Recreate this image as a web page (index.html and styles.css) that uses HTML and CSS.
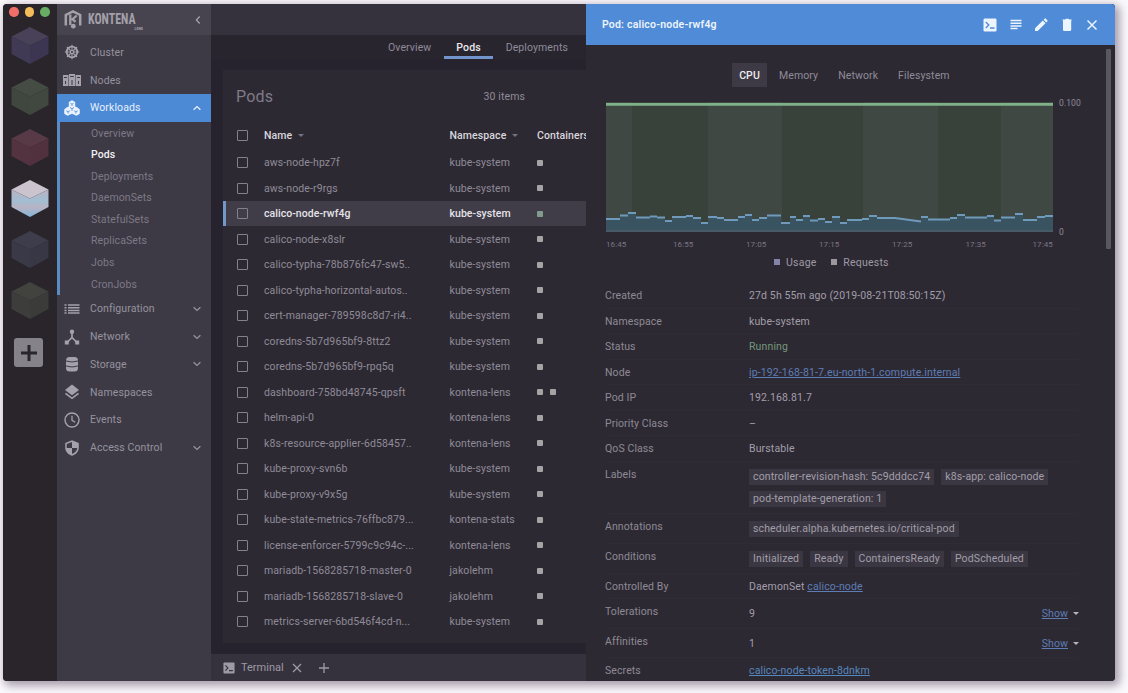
FILE: index.html
```html
<!DOCTYPE html>
<html lang="en">
<head>
<meta charset="utf-8">
<title>Kontena Lens</title>
<link rel="stylesheet" href="styles.css">
</head>
<body>
<svg class="defs" width="0" height="0">
  <linearGradient id="ice" x1="0" y1="0" x2="0" y2="1"><stop offset="0" stop-color="#b9b2c2"/><stop offset=".4" stop-color="#a3bdd3"/><stop offset=".65" stop-color="#b7b4c4"/><stop offset="1" stop-color="#83b4da"/></linearGradient>
  <symbol id="down" viewBox="0 0 10 10"><path d="M1.6 3.2 5 6.4 8.4 3.2" fill="none" stroke="currentColor" stroke-width="1.3"/></symbol>
  <symbol id="term" viewBox="0 0 14 14"><rect x=".5" y=".5" width="13" height="13" rx="1.2" fill="currentColor"/><path d="M2.8 4 5.8 7 2.8 10M7 10h4.5" fill="none" stroke="var(--cut)" stroke-width="1.3"/></symbol>
  <symbol id="cube" viewBox="0 0 38 38"><path d="M19 0 37.5 9.5 19 18.500 .5 9.500Z" fill="var(--t)"/><path d="M.5 9.500 19 18.500V37L.5 27Z" fill="var(--l)"/><path d="M37.500 9.500 19 18.500V37L37.500 27Z" fill="var(--r)"/></symbol>
</svg>
<div class="window">
  <nav class="rail">
    <div class="lights"><i class="red"></i><i class="yellow"></i><i class="green"></i></div>
    <div class="cubes">
      <svg class="cube c1"><use href="#cube"/></svg>
      <svg class="cube c2"><use href="#cube"/></svg>
      <svg class="cube c3"><use href="#cube"/></svg>
      <svg class="cube c4"><use href="#cube"/></svg>
      <svg class="cube c5"><use href="#cube"/></svg>
      <svg class="cube c6"><use href="#cube"/></svg>
    </div>
    <div class="add"><svg width="30" height="30" viewBox="0 0 30 30"><path d="M15 7v16M7 15h16" stroke="#2a262d" stroke-width="3"/></svg></div>
  </nav>

  <aside class="sidebar">
    <div class="brand">
      <svg width="18" height="19" viewBox="0 0 18 19"><path d="M1.800 15.500V5L9 1.400 16.200 5v10.500" fill="none" stroke="#a4a0aa" stroke-width="2.500"/><path d="M6.300 4.500v10.500M12.800 5.500 8.500 9.200l3 2.600" fill="none" stroke="#a4a0aa" stroke-width="2.300"/><circle cx="9.300" cy="16.200" r="2.400" fill="#a4a0aa"/></svg>
      <div class="wordmark"><span>KONTENA</span><small>LENS</small></div>
      <svg class="collapse" width="10" height="10" viewBox="0 0 10 10"><path d="M6.700 1.500 3.400 5l3.300 3.500" fill="none" stroke="currentColor" stroke-width="1.300"/></svg>
    </div>
    <div class="menu">
      <div class="item"><svg class="ico" viewBox="0 0 16 16"><g fill="none" stroke="currentColor"><circle cx="8" cy="8" r="5.300" stroke-width="1.800"/><circle cx="8" cy="8" r="1.700" stroke-width="1.300"/><path d="M8 .8v5M8 10v5.200M.8 8h5M10 8h5.200M3 3l3.500 3.500M13 3 9.500 6.500M3 13l3.500-3.500M13 13 9.500 9.500" stroke-width="1.100"/></g></svg><span>Cluster</span></div>
      <div class="item"><svg class="ico wide" viewBox="0 0 18 14"><path d="M0 2h5.500v11H0zM6 1h6v12H6zM12.500 2H18v11h-5.500z" fill="currentColor"/><path d="M1 4.500h3M7.200 3.500h3.600M14 4.500h3M2.500 8v3M9 7v5M15.500 8v3" stroke="#3d3a45"/></svg><span>Nodes</span></div>
      <div class="item active"><svg class="ico" viewBox="0 0 16 16"><path d="M8 .3 11.200 2v4.400l2.300 1 2.300 2v4.400l-3.300 1.900L8 13.800l-4.500 1.900L.2 13.800V9.400l2.300-2 2.300-1V2z" fill="currentColor"/><path d="M6.300 3.300l1.700.9 1.700-.9M2.300 10.800l1.800.9 1.700-.9M10.200 10.800l1.700.9 1.800-.9M4.100 11.700v1.800M11.900 11.700v1.800M8 4.200V6M8 8.500v2.500M6 7.500l2 1.200 2-1.200" stroke="#4a88d4" fill="none" stroke-width=".8"/></svg><span>Workloads</span><svg class="chev up"><use href="#down"/></svg></div>
      <div class="submenu">
        <span>Overview</span><span class="current">Pods</span><span>Deployments</span><span>DaemonSets</span><span>StatefulSets</span><span>ReplicaSets</span><span>Jobs</span><span>CronJobs</span>
      </div>
      <div class="item"><svg class="ico" viewBox="0 0 16 16"><path d="M.5 4h2M4 4h11.500M.5 6.700h2M4 6.700h11.500M.5 9.400h2M4 9.400h11.500M.5 12.100h2M4 12.100h11.500" stroke="currentColor" stroke-width="1.500"/></svg><span>Configuration</span><svg class="chev"><use href="#down"/></svg></div>
      <div class="item"><svg class="ico" viewBox="0 0 16 16"><path d="M8 3v6M8 8.500l-5 5M8 8.500l5 5" stroke="currentColor" stroke-width="1.700" fill="none"/><circle cx="8" cy="2.800" r="2.200" fill="currentColor"/><path d="M.8 11.500h4v4h-4zM11.200 11.500h4v4h-4z" fill="currentColor"/></svg><span>Network</span><svg class="chev"><use href="#down"/></svg></div>
      <div class="item"><svg class="ico" viewBox="0 0 16 16"><rect x="2" y="1" width="12" height="14.500" rx="3.500" fill="currentColor"/><path d="M2 5q6 2 12 0M2 10q6 2 12 0" stroke="#3d3a45" fill="none"/></svg><span>Storage</span><svg class="chev"><use href="#down"/></svg></div>
      <div class="item"><svg class="ico" viewBox="0 0 16 16"><path d="M8 .5 15 6 8 11.300 1 6z" fill="currentColor"/><path d="M1.500 9.300 8 14.300l6.500-5" fill="none" stroke="currentColor" stroke-width="1.700"/></svg><span>Namespaces</span></div>
      <div class="item"><svg class="ico" viewBox="0 0 16 16"><circle cx="8" cy="8" r="7" fill="none" stroke="currentColor" stroke-width="1.400"/><path d="M8 3.800V8.300l3.200 2" fill="none" stroke="currentColor" stroke-width="1.300"/></svg><span>Events</span></div>
      <div class="item"><svg class="ico" viewBox="0 0 16 16"><path d="M8 .3 14.800 3v4.500c0 4-2.900 7-6.800 8.300-3.900-1.300-6.800-4.300-6.800-8.300V3z" fill="currentColor"/><path d="M8 2v6H2.700V4zM8 8h5.300c-.4 3-2.500 5-5.300 6z" fill="#3d3a45"/></svg><span>Access Control</span><svg class="chev"><use href="#down"/></svg></div>
    </div>
  </aside>

  <main class="main">
    <div class="topbar"></div>
    <div class="tabs"><span>Overview</span><span class="on">Pods</span><span>Deployments</span></div>
    <section class="card">
      <header><h1>Pods</h1><span class="count">30 items</span></header>
      <div class="row head"><i class="box"></i><span>Name <b class="caret"></b></span><span>Namespace <b class="caret"></b></span><span class="last">Containers</span></div>
      <div class="row"><i class="box"></i><span>aws-node-hpz7f</span><span>kube-system</span><em></em></div>
      <div class="row"><i class="box"></i><span>aws-node-r9rgs</span><span>kube-system</span><em></em></div>
      <div class="row selected"><i class="box"></i><span>calico-node-rwf4g</span><span>kube-system</span><em></em></div>
      <div class="row"><i class="box"></i><span>calico-node-x8slr</span><span>kube-system</span><em></em></div>
      <div class="row"><i class="box"></i><span>calico-typha-78b876fc47-sw5..</span><span>kube-system</span><em></em></div>
      <div class="row"><i class="box"></i><span>calico-typha-horizontal-autos..</span><span>kube-system</span><em></em></div>
      <div class="row"><i class="box"></i><span>cert-manager-789598c8d7-ri4..</span><span>kube-system</span><em></em></div>
      <div class="row"><i class="box"></i><span>coredns-5b7d965bf9-8ttz2</span><span>kube-system</span><em></em></div>
      <div class="row"><i class="box"></i><span>coredns-5b7d965bf9-rpq5q</span><span>kube-system</span><em></em></div>
      <div class="row"><i class="box"></i><span>dashboard-758bd48745-qpsft</span><span>kontena-lens</span><em></em><em></em></div>
      <div class="row"><i class="box"></i><span>helm-api-0</span><span>kontena-lens</span><em></em></div>
      <div class="row"><i class="box"></i><span>k8s-resource-applier-6d58457..</span><span>kontena-lens</span><em></em></div>
      <div class="row"><i class="box"></i><span>kube-proxy-svn6b</span><span>kube-system</span><em></em></div>
      <div class="row"><i class="box"></i><span>kube-proxy-v9x5g</span><span>kube-system</span><em></em></div>
      <div class="row"><i class="box"></i><span>kube-state-metrics-76ffbc879...</span><span>kontena-stats</span><em></em></div>
      <div class="row"><i class="box"></i><span>license-enforcer-5799c9c94c-...</span><span>kontena-lens</span><em></em></div>
      <div class="row"><i class="box"></i><span>mariadb-1568285718-master-0</span><span>jakolehm</span><em></em></div>
      <div class="row"><i class="box"></i><span>mariadb-1568285718-slave-0</span><span>jakolehm</span><em></em></div>
      <div class="row"><i class="box"></i><span>metrics-server-6bd546f4cd-n...</span><span>kube-system</span><em></em></div>
    </section>
    <footer class="dock">
      <svg class="dock-term" width="12" height="12"><use href="#term"/></svg><span>Terminal</span>
      <svg class="dock-x" width="10" height="10" viewBox="0 0 10 10"><path d="M1 1l8 8M9 1 1 9" stroke="currentColor" stroke-width="1.300"/></svg>
      <svg width="10" height="10" viewBox="0 0 10 10"><path d="M5 0v10M0 5h10" stroke="currentColor" stroke-width="1.300"/></svg>
    </footer>
  </main>

  <section class="panel">
    <header class="panel-head">
      <h2>Pod: calico-node-rwf4g</h2>
      <div class="actions">
        <svg class="a-term" width="14" height="14"><use href="#term"/></svg>
        <svg width="14" height="14" viewBox="0 0 14 14"><path d="M1.500 2.500h11M1.500 5.200h11M1.500 7.900h11M1.500 10.600h7" stroke="currentColor" stroke-width="1.500"/></svg>
        <svg width="14" height="14" viewBox="0 0 14 14"><path d="M1 10.300 8.800 2.500l2.700 2.700L3.700 13H1zM9.600 1.700l1.200-1.200q.4-.3.800 0l1.900 1.900q.3.400 0 .8l-1.200 1.200z" fill="currentColor"/></svg>
        <svg width="14" height="14" viewBox="0 0 14 14"><path d="M2.500 1.500h2.700l.6-.8h2.800l.6.8h2.500v1h-9.200zM3 2.500h8.200v9.300q0 1.200-1.200 1.200H4.200Q3 13 3 11.800z" fill="currentColor"/></svg>
        <svg width="14" height="14" viewBox="0 0 14 14"><path d="M2.500 2.500l9 9M11.500 2.500l-9 9" stroke="currentColor" stroke-width="1.500"/></svg>
      </div>
    </header>
    <div class="panel-body">
      <div class="metrics"><span class="on">CPU</span><span>Memory</span><span>Network</span><span>Filesystem</span></div>
      <div class="chart">
        <svg width="447" height="130" viewBox="606 102 447 130">
          <path fill="#3f4843" d="M606 102h447v130H606z"/>
          <path fill="#38423b" d="M632 102h76v130h-76zM782 102h81v130h-81zM938 102h63v130h-63z"/>
          <path fill="#3a5360" d="M606 219h14v-3.500h8V213h8v4.500h29v3.500h7v-4h21v1h8v5h7v-6h9v1h7v2h14v-3h7v-2h7v5h7v-2h8v-2.500h14v7.500h9v-6h6v3h7v-4h7v4.500h8V219h7v3h7v-5h8v6h7v-3h15v-1h7v-3h8v2h18l26 3.500V217h7v2.500h22V218h7v-3h8v2.500h22V216h7v4.500h7v-3h14V214h8v6h14v-3h8v-1h8v16H606z"/>
          <path fill="none" stroke="#6f9abc" stroke-width="2" d="M606 219h14M620 215.500h8M628 213h8M636 217.500h14M650 216.500h7M657 217.500h8M665 221h7M672 217h14M686 216h7M693 218h8M701 223h7M708 217h9M717 218h7M724 220h14M738 217h7M745 215h7M752 220h7M759 218h8M767 215.500h14M781 223h9M790 217h6M796 220h7M803 216h7M810 220.500h8M818 219h7M825 222h7M832 217h8M840 223h7M847 220h15M862 219h7M869 216h8M877 218h18l26 3.500M921 217h7M928 219.500h22M950 218h7M957 215h8M965 217.500h22M987 216h7M994 220.500h7M1001 217.500h14M1015 214h8M1023 220h14M1037 217h8M1045 216h8"/>
          <path fill="#7fb08a" d="M606 103h447v2.700H606z"/><path fill="#56636b" d="M606 230.500h447v1H606z"/>
        </svg>
        <div class="scale"><span>0.100</span><span>0</span></div>
      </div>
      <div class="times"><span>16:45</span><span>16:55</span><span>17:05</span><span>17:15</span><span>17:25</span><span>17:35</span><span>17:45</span></div>
      <div class="legend"><i class="usage"></i><span>Usage</span><i></i><span>Requests</span></div>
      <dl class="details">
        <div class="d"><dt>Created</dt><dd>27d 5h 55m ago (2019-08-21T08:50:15Z)</dd></div>
        <div class="d"><dt>Namespace</dt><dd>kube-system</dd></div>
        <div class="d"><dt>Status</dt><dd class="running">Running</dd></div>
        <div class="d"><dt>Node</dt><dd><a>ip-192-168-81-7.eu-north-1.compute.internal</a></dd></div>
        <div class="d"><dt>Pod IP</dt><dd>192.168.81.7</dd></div>
        <div class="d"><dt>Priority Class</dt><dd>–</dd></div>
        <div class="d"><dt>QoS Class</dt><dd>Burstable</dd></div>
        <div class="d labels"><dt>Labels</dt><dd class="tags"><span>controller-revision-hash: 5c9dddcc74</span><span>k8s-app: calico-node</span><span>pod-template-generation: 1</span></dd></div>
        <div class="d medium"><dt>Annotations</dt><dd class="tags"><span>scheduler.alpha.kubernetes.io/critical-pod</span></dd></div>
        <div class="d conditions"><dt>Conditions</dt><dd class="tags"><span>Initialized</span><span>Ready</span><span>ContainersReady</span><span>PodScheduled</span></dd></div>
        <div class="d"><dt>Controlled By</dt><dd>DaemonSet <a>calico-node</a></dd></div>
        <div class="d medium"><dt>Tolerations</dt><dd class="num">9</dd><span class="show"><a>Show</a><b class="caret"></b></span></div>
        <div class="d medium"><dt>Affinities</dt><dd class="num">1</dd><span class="show"><a>Show</a><b class="caret"></b></span></div>
        <div class="d"><dt>Secrets</dt><dd><a class="bright">calico-node-token-8dnkm</a></dd></div>
      </dl>
      <div class="scrollbar"></div>
    </div>
  </section>
</div>
</body>
</html>
```
FILE: styles.css
```css
* { box-sizing: border-box; }
body { margin: 0; width: 1128px; height: 693px; overflow: hidden; background: #fbf8fc; padding: 4px 0 0 3px; font-family: Roboto, sans-serif; font-size: 10.5px; letter-spacing: .1px; color: #8f8b97; }
.defs { display: block; height: 0; position: absolute; }
.window { width: 1112px; height: 677px; display: flex; border-radius: 4px; overflow: hidden; background: #2d2933; box-shadow: 3px 3px 9px 2px #a9a1ae; }
span, dt, dd, h1, h2 { white-space: nowrap; }

.rail { width: 54px; flex: none; background: #29252b; padding: 3px 0 0 6px; }
.lights { display: flex; gap: 6px; height: 10px; }
.lights i { width: 9.500px; height: 9.500px; border-radius: 50%; }
.red { background: #ef6f68; } .yellow { background: #f3bd5b; } .green { background: #68ad63; }
.cubes { display: flex; flex-direction: column; gap: 13px; padding: 10px 0 0 1.500px; }
.cube { width: 38px; height: 38px; display: block; }
.c1 { --t: #484158; --l: #413a54; --r: #3d3652; }
.c2 { --t: #454c43; --l: #3f473e; --r: #40483f; }
.c3 { --t: #583a47; --l: #52333f; --r: #51313e; }
.c4 { --t: #cbc4cf; --l: url(#ice); --r: url(#ice); }
.c5 { --t: #3e3d4b; --l: #3a3948; --r: #383746; }
.c6 { --t: #42423f; --l: #3d3d3b; --r: #3b3c39; }
.add { width: 29px; height: 29px; margin: 18px 0 0 5px; border-radius: 3px; background: #86828a; }
.add svg { display: block; margin: -.5px; }

.sidebar { width: 154px; flex: none; background: #3d3a45; }
.brand { height: 31px; background: #47444f; display: flex; align-items: center; padding: 0 8px 0 7px; color: #a4a0aa; }
.wordmark { width: 55px; margin-left: 6px; padding-top: 4px; font-family: "Roboto Condensed", Roboto, sans-serif; font-weight: 700; letter-spacing: 0; }
.wordmark span { display: block; font-size: 14px; line-height: 14px; transform: scaleX(.85); transform-origin: left; }
.wordmark small { display: block; font-size: 4px; line-height: 5px; text-align: right; }
.collapse { margin-left: auto; margin-right: 0; }
.menu { padding-top: 3.500px; }
.item { height: 27.750px; display: flex; align-items: center; padding: 0 9px 0 7px; color: #96929e; }
.item > .ico { color: #a5a1ac; }
.ico { width: 16px; height: 16px; margin-right: 10px; flex: none; }
.ico.wide { width: 18px; height: 14px; margin: 0 9px 0 -1px; }
.item.active { background: #4c8ad5; color: #e7effa; }
.item.active > .ico { color: #e9f2fc; }
.chev { width: 10px; height: 10px; margin-left: auto; }
.chev.up { transform: rotate(180deg); }
.submenu { height: 173.200px; display: grid; grid-template-rows: repeat(8, 1fr); align-items: center; border-left: 3px solid #5a8cc4; padding: .5px 0 0 31px; color: #7d7986; }
.submenu .current { color: #f1eff3; font-weight: 500; }

.main { width: 375px; flex: none; display: flex; flex-direction: column; background: #26222e; overflow: hidden; }
.topbar { height: 31px; background: #36323d; flex: none; }
.tabs { height: 24px; flex: none; background: #29252f; display: flex; padding: 0 18px 0 164px; justify-content: space-between; line-height: 25px; }
.tabs > span:first-child { margin-left: 13px; }
.tabs .on { width: 49px; text-align: center; color: #e9e7ec; font-weight: 500; border-bottom: 3px solid #7395cc; }
.card { width: 363px; height: 573px; flex: none; margin: 11px 0 0 12px; background: #2d2933; }
.card header { height: 52px; display: flex; align-items: center; padding: 0 61px 0 13px; justify-content: space-between; }
.card h1 { margin: 0; font-size: 16px; font-weight: 400; letter-spacing: .2px; color: #7f7b87; }
.count { letter-spacing: .1px; }
.row { height: 25.500px; display: grid; grid-template-columns: 25px 185.500px 87.500px 12.500px 12px; align-items: center; padding: 1px 0 0 16px; }
.row.head { height: 27.500px; padding-top: 0; color: #d8d6dc; font-weight: 500; }
.row i.box { width: 11px; height: 11px; border: 1.500px solid #85818c; border-radius: 1px; margin-left: -2px; }
.row em { width: 6px; height: 6px; background: #a3a4a3; border-radius: 1px; }
.row.selected { background: #413d48; padding-left: 13px; border-left: 3px solid #7297c8; color: #e5e3e8; font-weight: 500; letter-spacing: .05px; }
.row.selected em { background: #829b8c; }
.caret { display: inline-block; border: 3px solid transparent; border-top-color: currentColor; border-bottom: 0; vertical-align: 2px; margin-left: 3px; }
.head .caret { color: #77737e; }
.dock { height: 27px; margin-top: auto; background: #36323d; display: flex; align-items: center; padding-left: 12px; font-size: 11px; letter-spacing: 0; color: #9d99a5; }
.dock-term { --cut: #36323d; margin-right: 6px; }
.dock-x { margin: 0 17px 0 8px; }

.panel { flex: 1; display: flex; flex-direction: column; background: #2d2933; overflow: hidden; }
.panel-head { height: 41px; flex: none; background: #4f8bd6; display: flex; align-items: center; justify-content: space-between; padding: 0 16px; color: #ecf4fd; }
.panel h2 { margin: 0; font-size: 10.500px; font-weight: 600; letter-spacing: .2px; }
.actions { display: flex; gap: 11.500px; --cut: #4f8bd6; }
.actions svg { display: block; }
.panel-body { position: relative; height: 636px; padding: 18px 15px 0 20px; }
.metrics { display: flex; height: 24px; line-height: 26px; margin-left: 126px; }
.metrics span { margin-right: 20px; }
.metrics .on { width: 35px; margin-right: 12px; text-align: center; background: #3e3a45; color: #eeecf0; font-weight: 500; }
.chart { display: flex; height: 130px; margin-top: 15px; }
.chart svg { flex: none; }
.scale { display: flex; flex-direction: column; justify-content: space-between; margin: -5px 0 -6px 6px; font-size: 8.500px; line-height: 12px; }
.times { display: grid; grid-template-columns: 30.500px 73px 73px 73px 73px 70px 67px; width: 460px; margin: 6px 0 0 -5.500px; font-size: 8px; line-height: 14px; color: #7a7682; }
.times { grid-template-columns: 67px 73px 73px 73px 73.500px 67px 30px; margin-left: 0; }
.legend { display: flex; align-items: center; height: 14px; margin: 3px 0 0 168px; color: #9d99a4; }
.legend i { width: 6px; height: 6px; margin-right: 6px; background: #9a979e; }
.legend .usage { background: #8583aa; }
.legend span { margin-right: 14.500px; letter-spacing: .25px; }
.details { margin: 14px 21px 0 -1px; }
.d { display: flex; height: 25.500px; line-height: 25px; border-bottom: 1px solid #302c36; }
dt { width: 144px; flex: none; color: #8d8995; }
dd { margin: 0; color: #a29ea9; }
dd:not(.tags) { letter-spacing: .13px; }
.running { color: #739879; }
.d a { color: #5d7db4; text-decoration: underline; }
.d a.bright { color: #5588bd; }
.labels { height: 52.500px; }
.medium { height: 29.500px; }
.conditions { height: 30px; }
.tags { display: flex; flex-wrap: wrap; align-content: flex-start; gap: 6px 7px; padding-top: 7px; letter-spacing: .14px; }
.tags span { height: 16px; line-height: 16px; padding: 0 4px; background: #3b3742; }
.num { padding-top: 2px; }
.show { margin-left: auto; padding-top: 2px; }
.show .caret { color: #b8b4be; margin-left: 5px; }
.scrollbar { position: absolute; right: 4px; top: 4px; width: 5px; height: 200px; background: #5b5760; border-radius: 1px; }
```
